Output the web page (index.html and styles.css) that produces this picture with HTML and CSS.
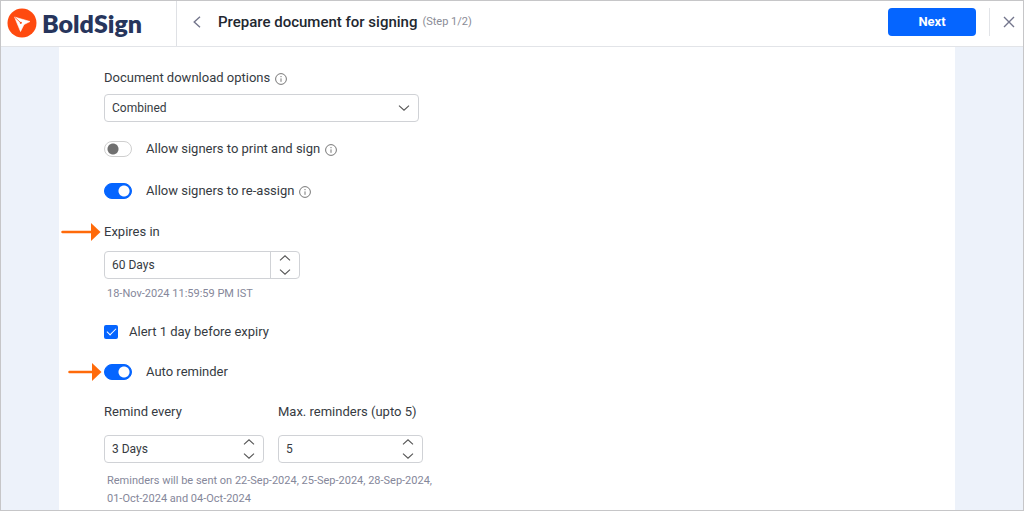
FILE: index.html
```html
<!DOCTYPE html>
<html lang="en">
<head>
<meta charset="utf-8">
<meta name="viewport" content="width=device-width, initial-scale=1">
<title>Prepare document for signing</title>
<link rel="stylesheet" href="styles.css">
</head>
<body>
<svg class="sprite" aria-hidden="true">
  <symbol id="info" viewBox="0 0 12 12"><circle cx="6" cy="6" r="5.4"/><path d="M6 5.4v3.4M6 3v1.2"/></symbol>
  <symbol id="up" viewBox="0 0 12 6"><path d="M1 5.4 6 .8l5 4.6"/></symbol>
  <symbol id="down" viewBox="0 0 12 6"><path d="M1 .6l5 4.6L11 .6"/></symbol>
</svg>
<header class="topbar">
  <div class="brand">
    <svg class="brand-mark" viewBox="0 0 30 30" aria-hidden="true">
      <circle cx="15" cy="15" r="14.5" fill="#ff4a0f"/>
      <path d="M7.500 9 23 13.500 17 16.500 13.500 23.500Z" fill="#fff" stroke="#fff" stroke-width=".6" stroke-linejoin="round"/>
      <path d="M7.500 9l6 5.500" stroke="#ff4a0f" stroke-width=".8"/>
      <circle cx="13.800" cy="14.800" r="1.100" fill="#ff4a0f"/>
    </svg>
    <span class="brand-name">BoldSign</span>
  </div>
  <button class="icon-btn back" aria-label="Back"><svg viewBox="0 0 8 12"><path d="M7 .8 1.200 6 7 11.200"/></svg></button>
  <h1 class="title">Prepare document for signing</h1>
  <span class="step">(Step 1/2)</span>
  <button class="next">Next</button>
  <button class="icon-btn close" aria-label="Close"><svg viewBox="0 0 12 12"><path d="M1 1l10 10M11 1 1 11"/></svg></button>
</header>
<main class="page">
  <form class="sheet">
    <div class="label-row">
      <label for="download">Document download options</label>
      <svg class="info"><use href="#info"/></svg>
    </div>
    <div class="field select">
      <select id="download"><option>Combined</option></select>
      <svg class="chevron"><use href="#down"/></svg>
    </div>
    <div class="switch-row print">
      <input class="switch" type="checkbox" id="print"><label for="print">Allow signers to print and sign</label>
      <svg class="info"><use href="#info"/></svg>
    </div>
    <div class="switch-row reassign">
      <input class="switch" type="checkbox" id="reassign" checked><label for="reassign">Allow signers to re-assign</label>
      <svg class="info"><use href="#info"/></svg>
    </div>
    <div class="label-row expires">
      <svg class="arrow long" viewBox="0 0 40 18" aria-hidden="true"><path d="M1.500 9H31" stroke="#ff6a0a" stroke-width="2.500" stroke-linecap="round"/><path d="M30 0l9.500 9L30 18Z" fill="#ff6a0a"/></svg>
      <label for="expires">Expires in</label>
    </div>
    <div class="field expiry">
      <input type="text" id="expires" value="60 Days">
      <div class="spin divided">
        <button type="button" aria-label="Increase"><svg class="chevron"><use href="#up"/></svg></button>
        <button type="button" aria-label="Decrease"><svg class="chevron"><use href="#down"/></svg></button>
      </div>
    </div>
    <p class="hint date">18-Nov-2024 11:59:59 PM IST</p>
    <div class="check-row">
      <input class="check" type="checkbox" id="alert" checked><label for="alert">Alert 1 day before expiry</label>
    </div>
    <div class="switch-row auto">
      <svg class="arrow short" viewBox="0 0 34 18" aria-hidden="true"><path d="M1.500 9H25" stroke="#ff6a0a" stroke-width="2.500" stroke-linecap="round"/><path d="M24 0l9.500 9L24 18Z" fill="#ff6a0a"/></svg>
      <input class="switch" type="checkbox" id="auto" checked><label for="auto">Auto reminder</label>
    </div>
    <div class="reminders">
      <div class="col every">
        <label for="every">Remind every</label>
        <div class="field">
          <input type="text" id="every" value="3 Days">
          <div class="spin">
            <button type="button" aria-label="Increase"><svg class="chevron"><use href="#up"/></svg></button>
            <button type="button" aria-label="Decrease"><svg class="chevron"><use href="#down"/></svg></button>
          </div>
        </div>
      </div>
      <div class="col max">
        <label for="max">Max. reminders (upto 5)</label>
        <div class="field">
          <input type="text" id="max" value="5">
          <div class="spin">
            <button type="button" aria-label="Increase"><svg class="chevron"><use href="#up"/></svg></button>
            <button type="button" aria-label="Decrease"><svg class="chevron"><use href="#down"/></svg></button>
          </div>
        </div>
      </div>
    </div>
    <p class="hint dates">Reminders will be sent on 22-Sep-2024, 25-Sep-2024, 28-Sep-2024,<br>01-Oct-2024 and 04-Oct-2024</p>
  </form>
</main>
</body>
</html>
```
FILE: styles.css
```css
* { box-sizing: border-box; }
body {
  margin: 0;
  min-height: 100vh;
  display: flex;
  flex-direction: column;
  border: 1px solid #c6c6c8;
  background: #edf2fa;
  color: #363b42;
  font: 13px/20px Roboto, "Liberation Sans", sans-serif;
}
.sprite { position: absolute; width: 0; height: 0; }
svg { fill: none; flex: none; }
button { padding: 0; border: 0; background: none; font: inherit; color: inherit; }

.topbar {
  display: flex;
  align-items: center;
  height: 46px;
  padding-bottom: 4px;
  background: #fff;
  border-bottom: 1px solid #e2e4e8;
}
.brand {
  display: flex;
  align-items: center;
  align-self: stretch;
  gap: 5px;
  width: 176px;
  margin-bottom: -4px;
  padding: 0 0 2px 6px;
  border-right: 1px solid #dfe1e5;
}
.brand-mark { width: 30px; height: 30px; }
.brand-name { color: #27355c; font: 800 25px/30px Lato, sans-serif; }
.icon-btn { display: flex; stroke: #73758c; stroke-width: 1.4; }
.back { margin: 0 17px 0 16px; }
.back svg { width: 8px; height: 12px; }
.title { margin: 0; font-size: 15px; font-weight: 500; color: #22272f; }
.step { margin-left: 5px; font-size: 11px; color: #8a8c96; }
.next {
  width: 88px;
  height: 28px;
  margin-left: auto;
  border-radius: 4px;
  background: #0565ff;
  color: #fff;
  font-weight: 700;
}
.close { align-items: center; height: 28px; margin-left: 13px; padding: 0 8px 0 13px; border-left: 1px solid #e2e4e8; }
.close svg { width: 12px; height: 12px; }

.page { flex: 1; display: flex; padding: 0 68px 0 58px; }
.sheet { flex: 1; padding: 21px 45px 2px; background: #fff; }
.label-row, .switch-row, .check-row { position: relative; display: flex; align-items: center; height: 20px; }
.info { width: 12px; height: 12px; margin: 2px 0 0 5px; stroke: #777; stroke-width: 1; }
.chevron { width: 12px; height: 6px; stroke: #555; stroke-width: 1.1; }

.field { display: flex; height: 28px; border: 1px solid #d0d2d6; border-radius: 4px; background: #fff; font-size: 12px; }
.field input, .field select {
  flex: 1;
  min-width: 0;
  padding: 0 7px;
  border: 0;
  outline: 0;
  background: none;
  appearance: none;
  font: inherit;
  color: inherit;
}
.select { align-items: center; max-width: 315px; margin-top: 6px; padding-right: 8px; }
.select select { height: 100%; }
.spin { display: flex; flex-direction: column; justify-content: center; gap: 8px; width: 29px; }
.spin button { display: flex; justify-content: center; }
.divided { border-left: 1px solid #d0d2d6; }
.expiry { max-width: 196px; margin-top: 9px; }

.switch {
  flex: none;
  width: 28px;
  height: 16px;
  margin: 0 14px 0 0;
  border: 1px solid #cfcfcf;
  border-radius: 8px;
  appearance: none;
  background: radial-gradient(circle at 8px 7px, #707070 5px, transparent 6px) #fff;
}
.switch:checked { border-color: #0565ff; background: radial-gradient(circle at 19px 7px, #fff 5px, transparent 6px) #0565ff; }
.print { margin-top: 17px; }
.reassign { margin-top: 22px; }
.expires { margin-top: 21px; }
.auto { margin-top: 20px; }

.check {
  width: 14px;
  height: 14px;
  margin: 0 11px 0 0;
  border-radius: 2px;
  appearance: none;
  background: #0565ff;
  display: grid;
  place-items: center;
}
.check::before {
  content: "";
  width: 8px;
  height: 4px;
  margin-bottom: 3px;
  border: solid #fff;
  border-width: 0 0 1px 1px;
  transform: rotate(-45deg);
}
.check-row { margin-top: 19px; }

.hint { margin: 0; padding-left: 3px; font-size: 11px; line-height: 18px; color: #85879a; }
.date { margin-top: 6px; }
.reminders { display: flex; gap: 14px; margin-top: 20px; }
.col { display: flex; flex-direction: column; gap: 13px; }
.every { width: 160px; }
.max { width: 145px; }
.dates { margin-top: 9px; }

.arrow { position: absolute; height: 18px; }
.long { left: -43px; width: 40px; }
.short { left: -36px; width: 34px; }
```
